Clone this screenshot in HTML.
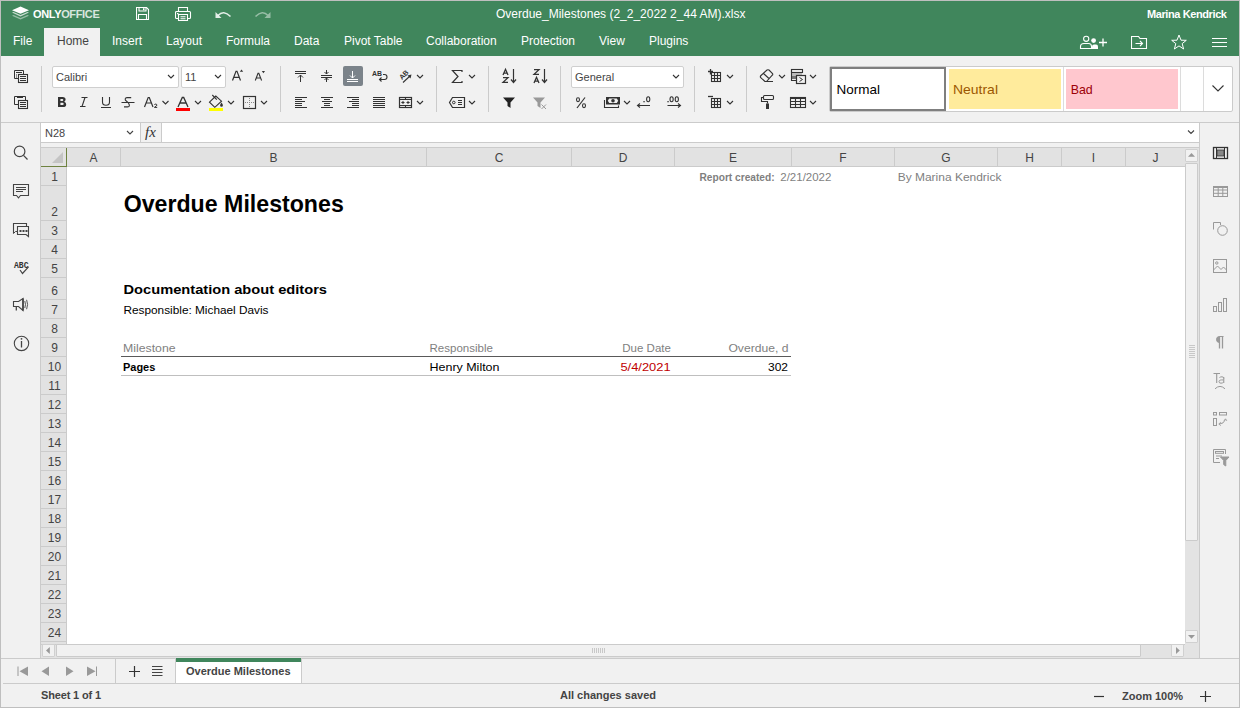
<!DOCTYPE html>
<html><head><meta charset="utf-8">
<style>
*{box-sizing:border-box;margin:0;padding:0}
html,body{width:1240px;height:708px;overflow:hidden;background:#f1f1f1;font-family:"Liberation Sans",sans-serif}
.a{position:absolute}
#frame{position:absolute;left:0;top:0;width:1240px;height:708px;border:1px solid #bfbfbf;pointer-events:none;z-index:50}
#hdr{left:0;top:0;width:1240px;height:56px;background:#40865c}
.wt{color:#fff;font-size:12px;white-space:nowrap;line-height:14px}
.tab{top:34px;color:#fff;font-size:12px;line-height:14px;white-space:nowrap}
.sep{width:1px;background:#cbcbcb}
.ic{position:absolute}
.hd{background:#e2e2e2;color:#444;font-size:13px;text-align:center;line-height:18px}
.hl{font-size:12px;color:#444;text-align:center;line-height:14px;white-space:nowrap}
.cell{position:absolute;white-space:nowrap;font-family:"Liberation Sans",sans-serif}
</style></head><body>
<div id="frame"></div>
<!-- HEADER -->
<div class="a" id="hdr"></div>
<!-- logo -->
<svg class="a" style="left:12px;top:6px" width="18" height="15" viewBox="0 0 18 15">
 <path d="M8.5 0.6 L17 4.2 L8.5 7.8 L0 4.2 Z" fill="#fff"/>
 <path d="M1.6 5.9 L0 6.6 L8.5 10.4 L17 6.6 L15.4 5.9 L8.5 8.9 Z" fill="#fff" opacity="0.72"/>
 <path d="M1.6 9.1 L0 9.8 L8.5 13.6 L17 9.8 L15.4 9.1 L8.5 12.1 Z" fill="#fff" opacity="0.45"/>
</svg>
<div class="a wt" style="left:33px;top:7px;font-weight:bold;font-size:11px;letter-spacing:-0.35px">ONLY<span style="opacity:.8">OFFICE</span></div>
<!-- title icons -->
<svg class="a" style="left:136px;top:7px" width="14" height="14" viewBox="0 0 14 14" fill="none" stroke="#fff" stroke-width="1.1">
 <path d="M0.5 0.5 H10.5 L12.5 2.5 V12.5 H0.5 Z"/><path d="M3 0.5 V4 H10 V0.5"/><path d="M2.5 12.5 V7.5 H10.5 V12.5"/><rect x="7" y="1.2" width="1.5" height="2" fill="#fff" stroke="none"/>
</svg>
<svg class="a" style="left:175px;top:7px" width="17" height="15" viewBox="0 0 17 15" fill="none" stroke="#fff" stroke-width="1.1">
 <path d="M3.5 4.5 V0.5 H12.5 V4.5"/><path d="M3.5 11.5 H1.5 Q0.5 11.5 0.5 10.5 V5.5 Q0.5 4.5 1.5 4.5 H14.5 Q15.5 4.5 15.5 5.5 V10.5 Q15.5 11.5 14.5 11.5 H12.5"/><path d="M3.5 7.5 H12.5 V13.5 H3.5 Z"/><path d="M5.5 9.7 H10.5 M5.5 11.7 H10.5"/><rect x="2" y="6" width="1.5" height="1.2" fill="#fff" stroke="none"/>
</svg>
<svg class="a" style="left:214px;top:9px" width="18" height="11" viewBox="0 0 18 11">
 <path d="M1.5 3 L1.5 9 L7.5 9 Z" fill="#fff" opacity="0.85"/><path d="M4 6.5 Q9.5 0.5 16.5 7.5" fill="none" stroke="#fff" stroke-width="1.6" opacity="0.85"/>
</svg>
<svg class="a" style="left:254px;top:9px" width="18" height="11" viewBox="0 0 18 11" opacity="0.45">
 <path d="M16.5 3 L16.5 9 L10.5 9 Z" fill="#fff"/><path d="M14 6.5 Q8.5 0.5 1.5 7.5" fill="none" stroke="#fff" stroke-width="1.6"/>
</svg>
<div class="a wt" style="left:496px;top:7px">Overdue_Milestones (2_2_2022 2_44 AM).xlsx</div>
<div class="a wt" style="left:1147px;top:7px;font-size:11px;font-weight:bold;letter-spacing:-0.4px">Marina Kendrick</div>
<!-- tabs -->
<div class="a" style="left:44px;top:28px;width:56px;height:28px;background:#f1f1f1"></div>
<div class="a tab" style="left:13px">File</div>
<div class="a tab" style="left:57px;color:#444">Home</div>
<div class="a tab" style="left:112px">Insert</div>
<div class="a tab" style="left:166px">Layout</div>
<div class="a tab" style="left:226px">Formula</div>
<div class="a tab" style="left:294px">Data</div>
<div class="a tab" style="left:344px">Pivot Table</div>
<div class="a tab" style="left:426px">Collaboration</div>
<div class="a tab" style="left:521px">Protection</div>
<div class="a tab" style="left:599px">View</div>
<div class="a tab" style="left:649px">Plugins</div>
<!-- right header icons -->
<svg class="a" style="left:1078px;top:34px" width="30" height="16" viewBox="0 0 30 16" fill="none" stroke="#fff" stroke-width="1.1">
 <circle cx="8.2" cy="4.8" r="2.6"/><path d="M2.5 14.5 V12.5 Q2.5 9.5 6 9.5 H10.5 Q13.5 9.5 13.5 12.5 V14.5 Z"/>
 <circle cx="15.6" cy="6.6" r="2.4" fill="#fff" stroke="none"/><path d="M14 15 V12.5 Q14 10.5 16 10.5 H18 Q20 10.5 20 12.5 V15 Z" fill="#fff" stroke="none"/>
 <path d="M21 8.5 H29 M25 4.5 V12.5" stroke-width="1.3"/>
</svg>
<svg class="a" style="left:1131px;top:36px" width="17" height="14" viewBox="0 0 17 14" fill="none" stroke="#fff" stroke-width="1.1">
 <path d="M0.5 0.5 H7.5 L9 2.5 H15.5 V12.5 H0.5 Z"/><path d="M4.5 7.5 H11.5 M9 5 L11.5 7.5 L9 10"/>
</svg>
<svg class="a" style="left:1171px;top:34px" width="16" height="16" viewBox="0 0 16 16" fill="none" stroke="#fff" stroke-width="1">
 <path d="M8 1 L10 6.2 L15.3 6.3 L11.2 9.6 L12.6 15 L8 11.9 L3.4 15 L4.8 9.6 L0.7 6.3 L6 6.2 Z"/>
</svg>
<svg class="a" style="left:1212px;top:37px" width="15" height="12" viewBox="0 0 15 12" fill="none" stroke="#fff" stroke-width="1">
 <path d="M0 1.5 H15 M0 5.5 H15 M0 9.5 H15"/>
</svg>

<!-- TOOLBAR placeholder -->
<!--TB-->
<!-- TOOLBAR -->
<div class="a" style="left:52px;top:66px;width:127px;height:22px;background:#fff;border:1px solid #cfcfcf;border-radius:2px"></div>
<div class="a" style="left:56px;top:71px;font-size:11px;color:#444;line-height:13px">Calibri</div>
<div class="a" style="left:181px;top:66px;width:45px;height:22px;background:#fff;border:1px solid #cfcfcf;border-radius:2px"></div>
<div class="a" style="left:185px;top:71px;font-size:11px;color:#444;line-height:13px">11</div>
<div class="a" style="left:571px;top:66px;width:113px;height:22px;background:#fff;border:1px solid #cfcfcf;border-radius:2px"></div>
<div class="a" style="left:575px;top:71px;font-size:11px;color:#444;line-height:13px">General</div>
<svg class="a" style="left:0;top:0" width="1240" height="122" fill="none" stroke="#333" stroke-width="1">
 <!-- separators -->
 <g stroke="#cbcbcb"><path d="M41.5 66V112M280.5 66V112M436.5 66V112M488.5 66V112M560.5 66V112M694.5 66V112M746.5 66V112"/></g>
 <!-- copy -->
 <path d="M18.5 78.5H14.5V70.5H23.5V74"/><path d="M16 72.5H22M16 75H17M16 77H17"/>
 <rect x="18.5" y="74.5" width="9" height="8" stroke-width="1.1"/><path d="M20 76.5H26M20 78.5H26M20 80.5H26"/>
 <!-- paste -->
 <path d="M18.5 104.5H14.5V96.5H25.5V100"/><rect x="17" y="96" width="6" height="2" fill="#333" stroke="none"/>
 <rect x="18.5" y="100.5" width="9" height="8" stroke-width="1.1"/><path d="M20 102.5H26M20 104.5H26M20 106.5H26"/>
 <!-- chevrons -->
 <g stroke-width="1.1"><path d="M168 75L171 78L174 75M215 75L218 78L221 75M673 75L676 78L679 75"/>
 <path d="M162.5 101L165.5 104L168.5 101M195 101L198 104L201 101M228 101L231 104L234 101M261 101L264 104L267 101"/>
 <path d="M417 75L420 78L423 75M417 101L420 104L423 101M469 75L472 78L475 75M469 101L472 104L475 101"/>
 <path d="M624 101L627 104L630 101M727 75L730 78L733 75M727 101L730 104L733 101M779 75L782 78L785 75M810 75L813 78L816 75M810 101L813 104L816 101"/></g>
 <!-- A^ Av -->
 <path d="M232.5 80.5L236 71.3H237L240.5 80.5M234.2 77.3H238.8" stroke-width="1.2"/><path d="M239.8 71.7L241.5 69.5L243.2 71.7Z" fill="#333" stroke="none"/>
 <path d="M255.3 80.5L258 73.3H258.8L261.6 80.5M256.5 78H260.4" stroke-width="1.1"/><path d="M261.8 71L263.4 73.3L265 71Z" fill="#333" stroke="none"/>
 <!-- B I U S -->
 <path fill-rule="evenodd" fill="#333" stroke="none" d="M58 97H62.6Q65.6 97 65.6 99.6Q65.6 101.2 64.2 101.8Q66.2 102.4 66.2 104.4Q66.2 107 62.9 107H58ZM60.4 98.9V101H62.3Q63.3 101 63.3 99.95Q63.3 98.9 62.3 98.9ZM60.4 102.8V105.1H62.6Q63.7 105.1 63.7 103.95Q63.7 102.8 62.6 102.8Z"/>
 <path d="M81.5 97.5H87.5M80 106.5H85.5M85 97.5L82 106.5" stroke-width="1.1"/>
 <path d="M102.5 97V102Q102.5 105.3 106 105.3Q109.5 105.3 109.5 102V97M101 107.5H111" stroke-width="1.1"/>
 <path d="M131.2 97.6H127.3Q124.6 97.6 125.4 100.2L128.6 103.2Q130.6 106.9 127.6 106.9H124M121.5 102.5H134.5" stroke-width="1.1"/>
 <!-- A2 -->
 <path d="M144.5 107L148.2 97.5H149.3L153 107M146 103H151.5" stroke-width="1.2"/><path d="M154.4 105Q154.6 104.1 155.7 104.1Q156.9 104.1 156.9 105.1Q156.9 105.9 154.4 107.4H157.2" stroke-width="1"/>
 <!-- A color -->
 <path d="M178 107L182.3 97.5H183.7L188 107M179.8 103H186.2" stroke-width="1.3"/><rect x="176" y="108" width="14" height="3" fill="#f00" stroke="none"/>
 <!-- fill -->
 <path d="M209.5 102.2L215.8 96L221.5 101.2L214.8 107.3Z" stroke-width="1.1"/><path d="M212.3 95L216.8 99.6" stroke-width="1.1"/><path d="M221.5 102.6Q219.9 104.6 220.1 105.4A1.4 1.4 0 0 0 222.9 105.4Q223.1 104.6 221.5 102.6Z" fill="#333" stroke="none"/>
 <rect x="209" y="108" width="14" height="3" fill="#ff0" stroke="none"/>
 <!-- borders -->
 <rect x="243.5" y="96.5" width="12" height="12" stroke-width="1.2"/><path d="M249.5 98V108M245 102.5H255" stroke-dasharray="1 1" stroke="#888"/>
 <!-- align top/middle -->
 <path d="M295 71.5H306M295 73.5H306M300.5 75V82M298 77.5L300.5 75L303 77.5"/>
 <path d="M321 75.5H332M321 77.5H332M326.5 70V74M324.5 72L326.5 74L328.5 72M326.5 82V78M324.5 80L326.5 78L328.5 80"/>
 <rect x="343" y="66" width="20" height="20" rx="2" fill="#7b838a" stroke="none"/>
 <path d="M347 79.5H358M347 81.5H358M352.5 71V78M350 75.5L352.5 78L355 75.5" stroke="#fff"/>
 <!-- wrap text -->
 <text x="372" y="76" font-family="Liberation Sans" font-weight="700" font-size="7" fill="#333" stroke="none" textLength="10" lengthAdjust="spacingAndGlyphs">AB</text>
 <path d="M383 74.5H384.5Q387 74.5 387 77Q387 79.5 384.5 79.5H379.5M381.5 77.5L379.5 79.5L381.5 81.5" stroke-width="1.1"/>
 <!-- orientation -->
 <text x="0" y="0" font-family="Liberation Sans" font-weight="700" font-size="7" fill="#333" stroke="none" transform="translate(402 80) rotate(-45)">AB</text>
 <path d="M403 82.5L410.5 75.5" stroke-width="1.1"/><path d="M411.5 74.5L407.5 75.5L410.5 78.5Z" fill="#333" stroke="none"/>
 <!-- align row 2 -->
 <g stroke-width="1.1">
 <path d="M295 97.5H307M295 99.5H302M295 101.5H305M295 103.5H302M295 105.5H302M295 107.5H307"/>
 <path d="M321 97.5H333M324 99.5H330M322 101.5H332M324 103.5H330M324 105.5H330M321 107.5H333"/>
 <path d="M347 97.5H359M352 99.5H359M349 101.5H359M352 103.5H359M352 105.5H359M347 107.5H359"/>
 <path d="M373 97.5H385M373 99.5H385M373 101.5H385M373 103.5H385M373 105.5H385M373 107.5H385"/>
 </g>
 <!-- merge -->
 <rect x="399.5" y="97.5" width="12" height="10" stroke-width="1.2"/><path d="M399.5 99.5H411.5M399.5 105.5H411.5M405.5 97.5V99.5M405.5 105.5V107.5" stroke-width="1.1"/>
 <path d="M402 102.5H404.5M406.5 102.5H409" stroke-width="1.2"/><path d="M401 102.5L403.5 100.8V104.2Z M410 102.5L407.5 100.8V104.2Z" fill="#333" stroke="none"/>
 <!-- sigma -->
 <path d="M462 72V70.5H452.5L458 76.5L452.5 82.5H462V81" stroke-width="1.2"/>
 <!-- tag -->
 <path d="M452.5 97.5H464.5V107.5H452.5L449.5 102.5Z" stroke-width="1.2"/><circle cx="453.8" cy="102.5" r="1.3" stroke-width="1"/><path d="M458 100.5H462M458 102.5H462M458 104.5H462" stroke-width="1.1"/>
 <!-- sort AZ / ZA -->
 <path d="M503 75L505.5 69.3L508 75M503.9 73.2H507.1M503 77.6H508L503 82.4H508" stroke-width="1.3"/>
 <path d="M513.5 69V82.5M511 79.5L513.5 82.5L516 79.5" stroke-width="1.2"/>
 <path d="M534 69.6H539L534 74.4H539M534 83L536.5 77.3L539 83M534.9 81.2H538.1" stroke-width="1.3"/>
 <path d="M544.5 69V82.5M542 79.5L544.5 82.5L547 79.5" stroke-width="1.2"/>
 <!-- filter -->
 <path d="M503 97.5H515L510.5 102.5V108L507.5 106V102.5Z" fill="#222" stroke="none"/>
 <path d="M533 97.5H545L540.5 102.5V108L537.5 106V102.5Z" fill="#999" stroke="none"/>
 <path d="M541.5 104.5L546 109M546 104.5L541.5 109" stroke="#999" stroke-width="1"/>
 <!-- percent -->
 <path d="M585 97.5L577 108" stroke-width="1.2"/><ellipse cx="578" cy="99.7" rx="1.5" ry="1.9" stroke-width="1.1"/><ellipse cx="584" cy="105.7" rx="1.5" ry="1.9" stroke-width="1.1"/>
 <!-- money -->
 <rect x="606" y="97" width="14" height="7.5" fill="#333" stroke="none"/><path d="M607.8 100.75L609.2 98.6H616.8L618.2 100.75L616.8 102.9H609.2Z" fill="#f1f1f1" stroke="none"/><circle cx="613" cy="100.75" r="1.8" fill="#333" stroke="none"/>
 <path d="M604.5 100V107.5H618.5V105.5" stroke-width="1.1"/>
 <!-- decimals -->
 <rect x="643.4" y="101" width="1.3" height="1.3" fill="#333" stroke="none"/><ellipse cx="648.2" cy="99.3" rx="1.6" ry="2.5" stroke-width="1.1"/>
 <path d="M637.5 105.5H650M640 103.5L637.5 105.5L640 107.5" stroke-width="1.1"/>
 <rect x="667.4" y="101" width="1.3" height="1.3" fill="#333" stroke="none"/><ellipse cx="671.6" cy="99.3" rx="1.6" ry="2.5" stroke-width="1.1"/><ellipse cx="676.8" cy="99.3" rx="1.6" ry="2.5" stroke-width="1.1"/>
 <path d="M667.5 105.5H680.5M678 103.5L680.5 105.5L678 107.5" stroke-width="1.1"/>
 <!-- insert cells -->
 <path d="M710.5 69V74.5M708 71.5H713" stroke-width="1.3"/>
 <rect x="711.5" y="72.5" width="9" height="9" stroke-width="1.1"/><path d="M714.5 72.5V81.5M717.5 72.5V81.5M711.5 75.5H720.5M711.5 78.5H720.5" stroke-width="1.1"/>
 <path d="M708 96.5H713" stroke-width="1.3"/>
 <rect x="711.5" y="98.5" width="9" height="9" stroke-width="1.1"/><path d="M714.5 98.5V107.5M717.5 98.5V107.5M711.5 101.5H720.5M711.5 104.5H720.5" stroke-width="1.1"/>
 <!-- eraser -->
 <path d="M765 81.5L760.5 77.5Q760 76.5 761 75.5L767 70Q768 69.5 769 70L772.5 73.5Q773 74.5 772.5 75L766.5 81.5Z M763.5 73.5L769.5 79M765 81.5H773" stroke-width="1.1"/>
 <!-- cond fmt -->
 <rect x="791.5" y="69.5" width="11" height="3" stroke-width="1.1"/><rect x="792" y="73" width="10" height="3" fill="#bbb" stroke="none"/><rect x="792" y="76" width="10" height="3" fill="#777" stroke="none"/><path d="M791.5 69.5V80.5H796" stroke-width="1.1"/>
 <rect x="796.5" y="75.5" width="9" height="8" fill="#f1f1f1" stroke-width="1.2"/><path d="M799.5 77.5L802.5 79.5L799.5 81.5" stroke-width="1"/>
 <!-- format painter -->
 <rect x="763.5" y="95.5" width="10" height="4" rx="1" stroke-width="1.1"/><path d="M763.5 97.5H761.5V101.5H767.5V103.5" stroke-width="1.1"/><rect x="766" y="103.5" width="3" height="5.5" fill="#333" stroke="none"/>
 <!-- table -->
 <rect x="790.5" y="97.5" width="15" height="10" stroke-width="1.1"/><rect x="790" y="97" width="16" height="2" fill="#333" stroke="none"/><path d="M795.5 97.5V107.5M800.5 97.5V107.5M790.5 101.5H805.5M790.5 104.5H805.5" stroke-width="1.1"/>
</svg>
<!-- styles gallery -->
<div class="a" style="left:829px;top:66px;width:404px;height:46px;background:#fff;border:1px solid #cbcbcb;border-radius:2px"></div>
<div class="a" style="left:830px;top:67px;width:116px;height:44px;border:2px solid #7f7f7f;background:#fff"></div>
<div class="a" style="left:949px;top:69px;width:112px;height:40px;background:#ffeb9c"></div>
<div class="a" style="left:1063px;top:67px;width:1px;height:44px;background:#dcdcdc"></div>
<div class="a" style="left:1066px;top:69px;width:112px;height:40px;background:#ffc7ce"></div>
<div class="a" style="left:1180px;top:67px;width:1px;height:44px;background:#dcdcdc"></div>
<div class="a" style="left:1203px;top:67px;width:1px;height:44px;background:#dcdcdc"></div>
<svg class="a" style="left:0;top:0" width="1240" height="122" font-family="Liberation Sans, sans-serif">
 <text x="836.5" y="94" font-size="13" fill="#000" textLength="43.4" lengthAdjust="spacingAndGlyphs">Normal</text>
 <text x="953" y="94" font-size="13" fill="#9c5700" textLength="45" lengthAdjust="spacingAndGlyphs">Neutral</text>
 <text x="1070.7" y="94" font-size="13" fill="#9c0006" textLength="22" lengthAdjust="spacingAndGlyphs">Bad</text>
 <path d="M1212.5 85.5L1218 91L1223.5 85.5" fill="none" stroke="#333" stroke-width="1.1"/>
</svg>

<!--/TB-->

<!-- FORMULA BAR -->
<div class="a" style="left:1px;top:122px;width:1238px;height:1px;background:#cbcbcb"></div>
<div class="a" style="left:41px;top:123px;width:1158px;height:20px;background:#fff;border-bottom:1px solid #cbcbcb"></div>
<div class="a" style="left:140px;top:123px;width:1px;height:19px;background:#cbcbcb"></div>
<div class="a" style="left:141px;top:123px;width:21px;height:19px;background:#f1f1f1;border-right:1px solid #cbcbcb"></div>
<div class="a" style="left:45px;top:127px;font-size:11px;color:#444;line-height:13px">N28</div>
<div class="a" style="left:145px;top:124px;font-family:'Liberation Serif',serif;font-style:italic;font-size:15px;color:#333;line-height:17px">fx</div>

<!-- LEFT SIDEBAR -->
<div class="a" style="left:40px;top:122px;width:1px;height:537px;background:#cbcbcb"></div>
<!-- RIGHT SIDEBAR -->
<div class="a" style="left:1199px;top:122px;width:1px;height:537px;background:#cbcbcb"></div>

<!-- GRID placeholder -->
<!--GRID-->
<div class="a" style="left:41px;top:147px;width:1144px;height:497px;background:#fff"></div>
<div class="a" style="left:41px;top:143px;width:1158px;height:4px;background:#f1f1f1"></div>
<div class="a" style="left:41px;top:147px;width:1158px;height:1px;background:#cbcbcb"></div>
<div class="a" style="left:41px;top:148px;width:1144px;height:18px;background:#e2e2e2"></div>
<div class="a" style="left:41px;top:166px;width:1144px;height:1px;background:#cbcbcb"></div>
<div class="a" style="left:41px;top:148px;width:25px;height:496px;background:#e2e2e2"></div>
<div class="a" style="left:66px;top:148px;width:1px;height:496px;background:#cbcbcb"></div>
<div class="a" style="left:120px;top:148px;width:1px;height:18px;background:#cbcbcb"></div>
<div class="a hl" style="left:67px;top:151px;width:53px">A</div>
<div class="a" style="left:426px;top:148px;width:1px;height:18px;background:#cbcbcb"></div>
<div class="a hl" style="left:121px;top:151px;width:305px">B</div>
<div class="a" style="left:571px;top:148px;width:1px;height:18px;background:#cbcbcb"></div>
<div class="a hl" style="left:427px;top:151px;width:144px">C</div>
<div class="a" style="left:674px;top:148px;width:1px;height:18px;background:#cbcbcb"></div>
<div class="a hl" style="left:572px;top:151px;width:102px">D</div>
<div class="a" style="left:791px;top:148px;width:1px;height:18px;background:#cbcbcb"></div>
<div class="a hl" style="left:675px;top:151px;width:116px">E</div>
<div class="a" style="left:894px;top:148px;width:1px;height:18px;background:#cbcbcb"></div>
<div class="a hl" style="left:792px;top:151px;width:102px">F</div>
<div class="a" style="left:997px;top:148px;width:1px;height:18px;background:#cbcbcb"></div>
<div class="a hl" style="left:895px;top:151px;width:102px">G</div>
<div class="a" style="left:1061px;top:148px;width:1px;height:18px;background:#cbcbcb"></div>
<div class="a hl" style="left:998px;top:151px;width:63px">H</div>
<div class="a" style="left:1125px;top:148px;width:1px;height:18px;background:#cbcbcb"></div>
<div class="a hl" style="left:1062px;top:151px;width:63px">I</div>
<div class="a hl" style="left:1126px;top:151px;width:59px">J</div>
<div class="a" style="left:41px;top:185px;width:25px;height:1px;background:#cbcbcb"></div>
<div class="a hl" style="left:42px;top:170px;width:25px">1</div>
<div class="a" style="left:41px;top:220px;width:25px;height:1px;background:#cbcbcb"></div>
<div class="a hl" style="left:42px;top:205px;width:25px">2</div>
<div class="a" style="left:41px;top:239px;width:25px;height:1px;background:#cbcbcb"></div>
<div class="a hl" style="left:42px;top:224px;width:25px">3</div>
<div class="a" style="left:41px;top:258px;width:25px;height:1px;background:#cbcbcb"></div>
<div class="a hl" style="left:42px;top:243px;width:25px">4</div>
<div class="a" style="left:41px;top:277px;width:25px;height:1px;background:#cbcbcb"></div>
<div class="a hl" style="left:42px;top:262px;width:25px">5</div>
<div class="a" style="left:41px;top:299px;width:25px;height:1px;background:#cbcbcb"></div>
<div class="a hl" style="left:42px;top:284px;width:25px">6</div>
<div class="a" style="left:41px;top:318px;width:25px;height:1px;background:#cbcbcb"></div>
<div class="a hl" style="left:42px;top:303px;width:25px">7</div>
<div class="a" style="left:41px;top:337px;width:25px;height:1px;background:#cbcbcb"></div>
<div class="a hl" style="left:42px;top:322px;width:25px">8</div>
<div class="a" style="left:41px;top:356px;width:25px;height:1px;background:#cbcbcb"></div>
<div class="a hl" style="left:42px;top:341px;width:25px">9</div>
<div class="a" style="left:41px;top:375px;width:25px;height:1px;background:#cbcbcb"></div>
<div class="a hl" style="left:42px;top:360px;width:25px">10</div>
<div class="a" style="left:41px;top:394px;width:25px;height:1px;background:#cbcbcb"></div>
<div class="a hl" style="left:42px;top:379px;width:25px">11</div>
<div class="a" style="left:41px;top:413px;width:25px;height:1px;background:#cbcbcb"></div>
<div class="a hl" style="left:42px;top:398px;width:25px">12</div>
<div class="a" style="left:41px;top:432px;width:25px;height:1px;background:#cbcbcb"></div>
<div class="a hl" style="left:42px;top:417px;width:25px">13</div>
<div class="a" style="left:41px;top:451px;width:25px;height:1px;background:#cbcbcb"></div>
<div class="a hl" style="left:42px;top:436px;width:25px">14</div>
<div class="a" style="left:41px;top:470px;width:25px;height:1px;background:#cbcbcb"></div>
<div class="a hl" style="left:42px;top:455px;width:25px">15</div>
<div class="a" style="left:41px;top:489px;width:25px;height:1px;background:#cbcbcb"></div>
<div class="a hl" style="left:42px;top:474px;width:25px">16</div>
<div class="a" style="left:41px;top:508px;width:25px;height:1px;background:#cbcbcb"></div>
<div class="a hl" style="left:42px;top:493px;width:25px">17</div>
<div class="a" style="left:41px;top:527px;width:25px;height:1px;background:#cbcbcb"></div>
<div class="a hl" style="left:42px;top:512px;width:25px">18</div>
<div class="a" style="left:41px;top:546px;width:25px;height:1px;background:#cbcbcb"></div>
<div class="a hl" style="left:42px;top:531px;width:25px">19</div>
<div class="a" style="left:41px;top:565px;width:25px;height:1px;background:#cbcbcb"></div>
<div class="a hl" style="left:42px;top:550px;width:25px">20</div>
<div class="a" style="left:41px;top:584px;width:25px;height:1px;background:#cbcbcb"></div>
<div class="a hl" style="left:42px;top:569px;width:25px">21</div>
<div class="a" style="left:41px;top:603px;width:25px;height:1px;background:#cbcbcb"></div>
<div class="a hl" style="left:42px;top:588px;width:25px">22</div>
<div class="a" style="left:41px;top:622px;width:25px;height:1px;background:#cbcbcb"></div>
<div class="a hl" style="left:42px;top:607px;width:25px">23</div>
<div class="a" style="left:41px;top:641px;width:25px;height:1px;background:#cbcbcb"></div>
<div class="a hl" style="left:42px;top:626px;width:25px">24</div>
<svg class="a" style="left:52px;top:152px" width="11" height="11"><path d="M11 0 V11 H0 Z" fill="#c4c4c4"/></svg>
<div class="a" style="left:66px;top:148px;width:1px;height:19px;background:#6e8240"></div>
<div class="a" style="left:41px;top:166px;width:26px;height:1px;background:#6e8240"></div>
<svg class="a" style="left:0;top:0" width="1240" height="708" font-family="Liberation Sans, sans-serif">
<rect x="121" y="356" width="670" height="1" fill="#595959"/>
<rect x="121" y="375" width="670" height="1" fill="#bfbfbf"/>
<text x="699.5" y="181" font-size="11.5" font-weight="700" fill="#7f7f7f" textLength="75.1" lengthAdjust="spacingAndGlyphs">Report created:</text>
<text x="780.3" y="181" font-size="11.5" font-weight="400" fill="#7f7f7f" textLength="51.1" lengthAdjust="spacingAndGlyphs">2/21/2022</text>
<text x="897.7" y="181" font-size="11.5" font-weight="400" fill="#7f7f7f" textLength="103.8" lengthAdjust="spacingAndGlyphs">By Marina Kendrick</text>
<text x="123.7" y="211.7" font-size="24" font-weight="700" fill="#000" textLength="220.1" lengthAdjust="spacingAndGlyphs">Overdue Milestones</text>
<text x="123.5" y="293.6" font-size="13.5" font-weight="700" fill="#000" textLength="203.5" lengthAdjust="spacingAndGlyphs">Documentation about editors</text>
<text x="123.5" y="313.5" font-size="10.8" font-weight="400" fill="#000" textLength="145.0" lengthAdjust="spacingAndGlyphs">Responsible: Michael Davis</text>
<text x="123" y="352" font-size="11.2" font-weight="400" fill="#7f7f7f" textLength="52.6" lengthAdjust="spacingAndGlyphs">Milestone</text>
<text x="429.5" y="352" font-size="11.2" font-weight="400" fill="#7f7f7f" textLength="63.5" lengthAdjust="spacingAndGlyphs">Responsible</text>
<text x="622.3" y="352" font-size="11.2" font-weight="400" fill="#7f7f7f" textLength="48.6" lengthAdjust="spacingAndGlyphs">Due Date</text>
<text x="728.4" y="352" font-size="11.2" font-weight="400" fill="#7f7f7f" textLength="60.0" lengthAdjust="spacingAndGlyphs">Overdue, d</text>
<text x="123" y="371.2" font-size="11.2" font-weight="700" fill="#000" textLength="32.3" lengthAdjust="spacingAndGlyphs">Pages</text>
<text x="429.5" y="371.2" font-size="11.2" font-weight="400" fill="#000" textLength="70.0" lengthAdjust="spacingAndGlyphs">Henry Milton</text>
<text x="620.4" y="371.2" font-size="11.2" font-weight="400" fill="#c00000" textLength="50.3" lengthAdjust="spacingAndGlyphs">5/4/2021</text>
<text x="768" y="371.2" font-size="11.2" font-weight="400" fill="#000" textLength="20.0" lengthAdjust="spacingAndGlyphs">302</text>
</svg>
<!--/GRID-->

<!--REST-->
<!-- formula chevrons -->
<svg class="a" style="left:0;top:0" width="1240" height="708" fill="none" stroke="#444" stroke-width="1.1">
 <path d="M127 131L130 134L133 131M1188 130.5L1191 133.5L1194 130.5"/>
</svg>
<!-- left sidebar icons -->
<svg class="a" style="left:0;top:0" width="40" height="360" fill="none" stroke="#444" stroke-width="1.1">
 <circle cx="19.6" cy="151.4" r="5.3" stroke-width="1.2"/><path d="M23.5 155.3L27.5 159.5" stroke-width="1.2"/>
 <path d="M13.5 184.5H28.5V195.5H20.5L18.5 197.8L16.5 195.5H13.5Z" stroke-width="1.1"/><path d="M16 187.5H26M16 189.5H26M16 191.5H23"/>
 <path d="M13.5 233.5V223.5H26.5V226" stroke-width="1.1"/><path d="M17.5 226.5H28.5V236.5L26 234.5H17.5Z" stroke-width="1.1"/>
 <path d="M13.5 233.5L15.5 231.5H17" stroke-width="1"/>
 <rect x="19.5" y="230" width="2" height="2" fill="#444" stroke="none"/><rect x="22.5" y="230" width="2" height="2" fill="#444" stroke="none"/><rect x="25.5" y="230" width="2" height="2" fill="#444" stroke="none"/>
 <text x="14" y="268" font-family="Liberation Mono" font-weight="700" font-size="8.5" fill="#333" stroke="none" textLength="14.5" lengthAdjust="spacingAndGlyphs">ABC</text>
 <path d="M20 270L22.5 273.5L28.5 266.8" stroke-width="1.2"/>
 <path d="M13.5 301.5H18.5L23 298.5V310.5L18.5 306.5H13.5Z" stroke-width="1.1"/><path d="M16.3 306.5V310.5" stroke-width="1.3"/><path d="M23 298.5V310.5" stroke-width="1.6"/>
 <path d="M24.8 301Q26.2 304.5 24.8 308M26.6 299.8Q28.6 304.5 26.6 309.2" stroke-width="0.9"/>
 <circle cx="21.5" cy="343.4" r="7.2" stroke-width="1.1"/><path d="M21.5 341V347.5" stroke-width="1.3"/><circle cx="21.5" cy="338.8" r="0.9" fill="#444" stroke="none"/>
</svg>
<!-- right sidebar icons -->
<svg class="a" style="left:1200px;top:0" width="40" height="480" fill="none" stroke="#999" stroke-width="1">
 <rect x="13.5" y="147.5" width="14" height="11" stroke="#333" stroke-width="1.3"/><path d="M16.5 147.5V158.5M24.5 147.5V158.5" stroke="#333"/><rect x="17" y="150" width="7" height="6" fill="#888" stroke="#333" stroke-width="0.8"/>
 <rect x="13.5" y="186.5" width="14" height="10"/><path d="M13.5 190H27.5M13.5 193.3H27.5M18.2 186.5V196.5M22.8 186.5V196.5"/><rect x="13.5" y="186.5" width="14" height="1.5" fill="#999" stroke="none"/>
 <path d="M13.5 229.5V222.5H20.5V225"/><circle cx="22.5" cy="230.5" r="4.8"/>
 <rect x="13.5" y="259.5" width="13" height="13"/><circle cx="16.8" cy="263" r="1.2"/><path d="M13.5 270L17.5 266L21 269.5L23.5 267L26.5 270"/>
 <rect x="13.5" y="306.5" width="3" height="5"/><rect x="18.5" y="302.5" width="3" height="9"/><rect x="23.5" y="298.5" width="3" height="13"/>
 <path d="M19.5 336.5V348.5M22.5 336.5V348.5" stroke-width="1.3"/><path d="M19.5 336.5H23.5M19.5 336.5A3 3 0 0 0 19.5 342.5Z" fill="#999"/>
  <path d="M13.5 373.5H20M16.7 373.5V383" stroke-width="1.1"/><path d="M23.8 377V383M19.5 377.5Q20.5 376.8 22 376.8Q23.8 376.8 23.8 378.5M23.8 380Q19 379.5 19 381.6Q19 383.2 21 383.2Q22.8 383.2 23.8 381.8" stroke-width="1"/><path d="M15 388.8Q20 384 25 388.8" stroke-width="1"/>
 <rect x="13.5" y="412.5" width="3" height="2.5"/><rect x="19.5" y="412.5" width="7" height="2.5"/><rect x="13.5" y="418.5" width="3" height="7"/>
 <path d="M19.5 424Q23.5 424 25.5 419.5" /><path d="M18.8 424L20.8 422.2M18.8 424L20.8 425.6M25.5 418.8L24 420.6M25.5 418.8L26.8 420.8" stroke-width="0.9"/>
 <path d="M13.5 449.5H25.5V454M13.5 449.5V462.5H20"/><rect x="15.5" y="451.5" width="8" height="1.8" fill="none"/><path d="M16 456H22M16 458.5H19"/><path d="M20.5 457H29L25.8 460.5V466L23.7 464.6V460.5Z" fill="#999"/>
</svg>
<!-- vertical scrollbar -->
<div class="a" style="left:1185px;top:148px;width:14px;height:510px;background:#e3e3e3"></div>
<div class="a" style="left:1185px;top:149px;width:13px;height:13px;background:#f1f1f1;border:1px solid #d0d0d0;border-radius:1px"></div>
<svg class="a" style="left:1187px;top:152px" width="9" height="6"><path d="M1 4.8L4.5 1L8 4.8Z" fill="#999"/></svg>
<div class="a" style="left:1185px;top:163px;width:13px;height:378px;background:#f1f1f1;border:1px solid #cbcbcb;border-radius:1px"></div>
<svg class="a" style="left:1189px;top:345px" width="6" height="14"><path d="M0 0.5H6M0 2.5H6M0 4.5H6M0 6.5H6M0 8.5H6M0 10.5H6M0 12.5H6" stroke="#c8c8c8" stroke-width="1"/></svg>
<div class="a" style="left:1185px;top:630px;width:13px;height:13px;background:#f1f1f1;border:1px solid #d0d0d0;border-radius:1px"></div>
<svg class="a" style="left:1187px;top:634px" width="9" height="6"><path d="M1 1L4.5 4.8L8 1Z" fill="#999"/></svg>
<!-- horizontal scrollbar -->
<div class="a" style="left:41px;top:644px;width:1144px;height:14px;background:#e3e3e3;border-top:1px solid #cbcbcb"></div>
<div class="a" style="left:41px;top:642px;width:25px;height:2px;background:#e2e2e2"></div>
<div class="a" style="left:42px;top:644px;width:13px;height:13px;background:#f1f1f1;border:1px solid #d0d0d0;border-radius:1px"></div>
<svg class="a" style="left:45px;top:646px" width="6" height="9"><path d="M4.8 1L1 4.5L4.8 8Z" fill="#999"/></svg>
<div class="a" style="left:56px;top:644px;width:1085px;height:13px;background:#f1f1f1;border:1px solid #cbcbcb;border-radius:1px"></div>
<svg class="a" style="left:592px;top:648px" width="14" height="5"><path d="M0.5 0V5M2.5 0V5M4.5 0V5M6.5 0V5M8.5 0V5M10.5 0V5M12.5 0V5" stroke="#c8c8c8" stroke-width="1"/></svg>
<div class="a" style="left:1171px;top:644px;width:13px;height:13px;background:#f1f1f1;border:1px solid #d0d0d0;border-radius:1px"></div>
<svg class="a" style="left:1175px;top:646px" width="6" height="9"><path d="M1 1L4.8 4.5L1 8Z" fill="#999"/></svg>
<!-- sheet tab bar -->
<div class="a" style="left:115px;top:659px;width:1px;height:24px;background:#cbcbcb"></div>
<svg class="a" style="left:0;top:650px" width="180" height="40">
 <path d="M18 16.5V26" stroke="#999" stroke-width="1"/><path d="M28 16.5V26L19.5 21.25Z" fill="#999"/>
 <path d="M49 16.5V26L41.5 21.25Z" fill="#999"/>
 <path d="M66 16.5V26L73.5 21.25Z" fill="#999"/>
 <path d="M87 16.5V26L95.5 21.25Z" fill="#999"/><path d="M96.5 16.5V26" stroke="#999" stroke-width="1"/>
 <path d="M134.5 16V27M129 21.5H140" stroke="#333" stroke-width="1.2"/>
 <path d="M152 16.5H162.5M152 19.5H162.5M152 22.5H162.5M152 25.5H162.5" stroke="#444" stroke-width="1"/>
</svg>
<div class="a" style="left:175px;top:658px;width:127px;height:25px;background:#fff;border-left:1px solid #cbcbcb;border-right:1px solid #cbcbcb;z-index:5"></div>
<div class="a" style="left:176px;top:658px;width:125px;height:4px;background:#40865c;z-index:6"></div>
<div class="a" style="left:186px;top:665px;font-size:11px;font-weight:bold;color:#444;line-height:13px;z-index:6">Overdue Milestones</div>
<!-- status zoom icons -->
<svg class="a" style="left:1090px;top:688px" width="130" height="18" stroke="#333" stroke-width="1.2">
 <path d="M4 8.5H14"/><path d="M110 8.5H121M115.5 3V14"/>
</svg>

<!--/REST-->
<!-- BOTTOM -->
<div class="a" style="left:1px;top:658px;width:1238px;height:1px;background:#cbcbcb"></div>
<div class="a" style="left:3px;top:683px;width:1236px;height:1px;background:#cbcbcb"></div>
<div class="a" style="left:41px;top:689px;font-size:11px;font-weight:bold;color:#444;line-height:13px;letter-spacing:-0.15px">Sheet 1 of 1</div>
<div class="a" style="left:560px;top:689px;font-size:11px;font-weight:bold;color:#444;line-height:13px">All changes saved</div>
<div class="a" style="left:1122px;top:690px;font-size:11px;font-weight:bold;color:#444;line-height:13px">Zoom 100%</div>
</body></html>
